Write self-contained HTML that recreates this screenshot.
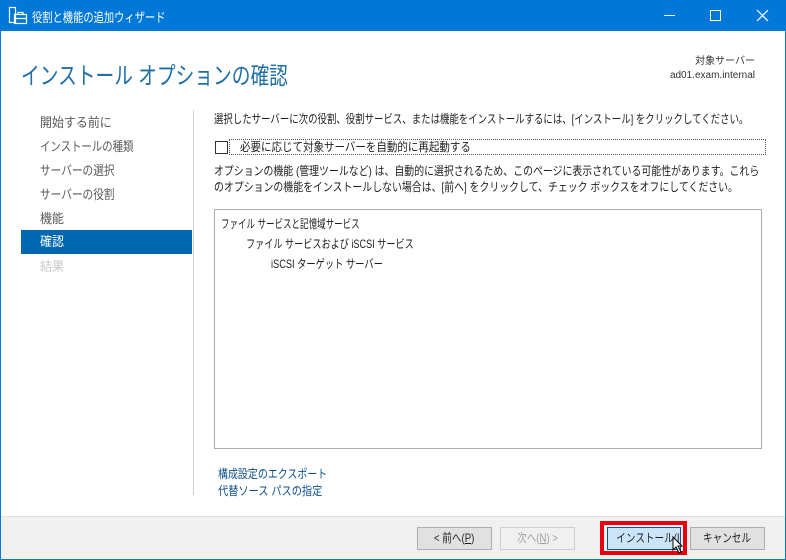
<!DOCTYPE html>
<html><head><meta charset="utf-8"><style>
*{margin:0;padding:0;box-sizing:border-box}
body{width:786px;height:560px;overflow:hidden;background:#0078d7;font-family:"Liberation Sans","Noto Sans CJK JP",sans-serif;font-size:12px;color:#1e1e1e;position:relative}
.abs{position:absolute;white-space:nowrap;transform-origin:0 50%}
#win{position:absolute;left:1px;top:31px;width:784px;height:528px;background:#fff}
#foot{position:absolute;left:1px;top:516px;width:784px;height:43px;background:#f0f0f0;border-top:1px solid #dfdfdf}
.btn{position:absolute;height:23px;border:1px solid #adadad;background:#e1e1e1;text-align:center;line-height:21px;font-size:12px;white-space:nowrap;overflow:hidden}
.btn span{display:inline-block;transform:scaleX(.8)}
.nav{position:absolute;left:21px;width:171px;height:24px;line-height:24px;padding-left:19px;font-size:13px;color:#5a5a5a;white-space:nowrap}
.nav span{display:inline-block;transform-origin:0 50%}
</style></head><body>
<svg class="abs" style="left:8px;top:6px" width="20" height="20" viewBox="0 0 20 20" fill="none" stroke="#fff" stroke-width="1.2"><rect x="1.5" y="1.5" width="6" height="15"/><rect x="6.5" y="8.5" width="12" height="9"/><path d="M10 8.5V6.5h5v2M6.5 12.5h12"/></svg>
<div class="abs" style="left:32px;top:7px;color:#fff;font-size:13px;transform:scaleX(.79)">役割と機能の追加ウィザード</div>
<div class="abs" style="left:664px;top:15px;width:11px;height:1px;background:#fff"></div>
<div class="abs" style="left:710px;top:10px;width:11px;height:11px;border:1px solid #fff"></div>
<svg class="abs" style="left:756px;top:9px" width="13" height="13"><path d="M1 1L12 12M12 1L1 12" stroke="#fff" stroke-width="1.2"/></svg>
<div id="win"></div>
<div class="abs" style="left:21px;top:56px;font-size:24px;color:#1d6fa5;transform:scaleX(.78)">インストール オプションの確認</div>
<div class="abs" style="right:31px;top:55px;font-size:10px;text-align:right;line-height:14px;color:#333">対象サーバー<br>ad01.exam.internal</div>
<div class="abs" style="left:193px;top:110px;width:1px;height:385px;background:#cfcfcf"></div>
<div class="nav" style="top:111px"><span style="transform:scaleX(.92)">開始する前に</span></div>
<div class="nav" style="top:135px"><span style="transform:scaleX(.8)">インストールの種類</span></div>
<div class="nav" style="top:159px"><span style="transform:scaleX(.82)">サーバーの選択</span></div>
<div class="nav" style="top:183px"><span style="transform:scaleX(.82)">サーバーの役割</span></div>
<div class="nav" style="top:207px"><span style="transform:scaleX(.92)">機能</span></div>
<div class="nav" style="top:230px;background:#0067b0;color:#fff"><span style="transform:scaleX(.92)">確認</span></div>
<div class="nav" style="top:255px;color:#c8c8c8"><span style="transform:scaleX(.92)">結果</span></div>
<div class="abs" style="left:214px;top:110px;transform:scaleX(.785)">選択したサーバーに次の役割、役割サービス、または機能をインストールするには、[インストール] をクリックしてください。</div>
<div class="abs" style="left:215px;top:141px;width:13px;height:13px;border:1px solid #333"></div>
<div class="abs" style="left:229px;top:139px;width:537px;height:16px;border:1px dotted #555"></div>
<div class="abs" style="left:240px;top:140px;line-height:14px;transform:scaleX(.875)">必要に応じて対象サーバーを自動的に再起動する</div>
<div class="abs" style="left:214px;top:163px;line-height:16px;transform:scaleX(.825)">オプションの機能 (管理ツールなど) は、自動的に選択されるため、このページに表示されている可能性があります。これら<br>のオプションの機能をインストールしない場合は、[前へ] をクリックして、チェック ボックスをオフにしてください。</div>
<div class="abs" style="left:214px;top:209px;width:548px;height:240px;border:1px solid #adadad"></div>
<div class="abs" style="left:221px;top:214px;line-height:20px;transform:scaleX(.71)">ファイル サービスと記憶域サービス</div>
<div class="abs" style="left:246px;top:234px;line-height:20px;transform:scaleX(.76)">ファイル サービスおよび iSCSI サービス</div>
<div class="abs" style="left:271px;top:254px;line-height:20px;transform:scaleX(.77)">iSCSI ターゲット サーバー</div>
<div class="abs" style="left:218px;top:465px;color:#0a4f8a;transform:scaleX(.83)">構成設定のエクスポート</div>
<div class="abs" style="left:218px;top:482px;color:#0a4f8a;transform:scaleX(.85)">代替ソース パスの指定</div>
<div id="foot"></div>
<div class="btn" style="left:417px;top:527px;width:75px"><span>&lt; 前へ(<u>P</u>)</span></div>
<div class="btn" style="left:500px;top:527px;width:75px;background:#f0f0f0;border-color:#cfcfcf;color:#a0a0a0"><span>次へ(<u>N</u>) &gt;</span></div>
<div class="abs" style="left:600px;top:521px;width:87px;height:34px;border:4px solid #e8000b"></div>
<div class="btn" style="left:607px;top:527px;width:74px;background:#cce4f7;border-color:#005499"><span>インストール(<u>I</u>)</span></div>
<div class="btn" style="left:690px;top:527px;width:75px"><span>キャンセル</span></div>
<svg class="abs" style="left:672px;top:536px" width="12" height="18"><path d="M1 1V14L4 11L7 17L9 16L6 10H10Z" fill="#fff" stroke="#000"/></svg>
</body></html>
